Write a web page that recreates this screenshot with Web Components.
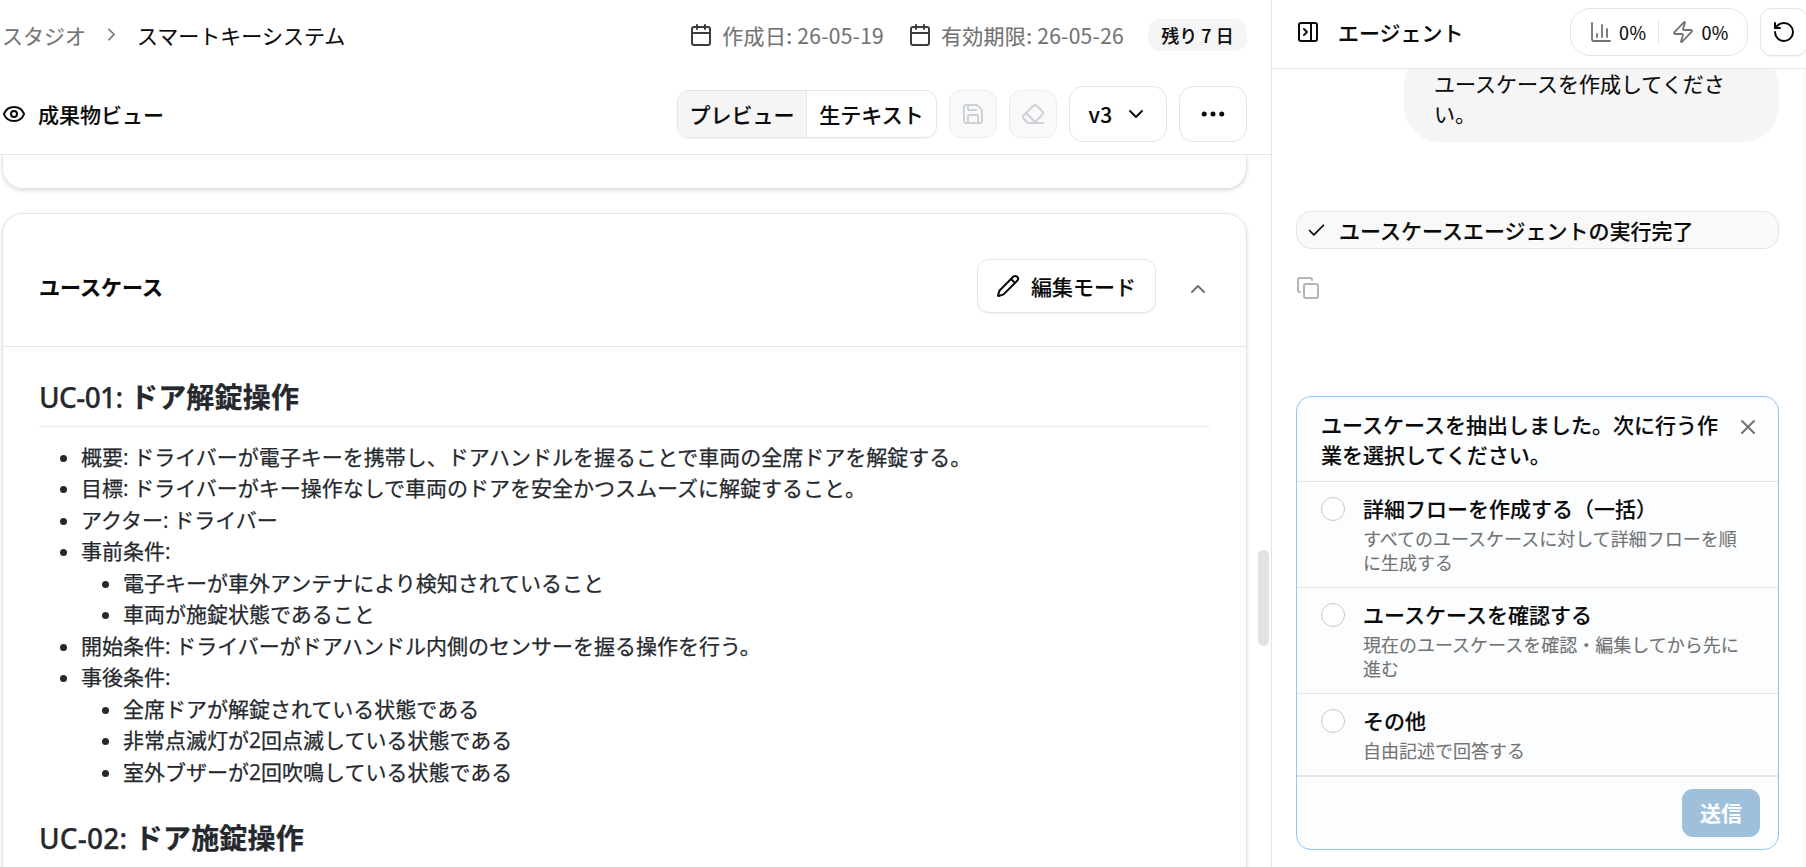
<!DOCTYPE html>
<html lang="ja">
<head>
<meta charset="utf-8">
<title>スマートキーシステム</title>
<style>
  :root {
    --border: #e5e5e5;
    --fg: #0a0a0a;
    --muted: #737373;
    --soft: #f5f5f5;
    --shadow: 0 1.5px 4.5px rgba(0, 0, 0, .1), 0 1.5px 3px -1.5px rgba(0, 0, 0, .1);
  }
  * { box-sizing: border-box; }
  html, body { height: 100%; }
  body {
    margin: 0;
    overflow: hidden;
    background: #fff;
    color: var(--fg);
    font: 400 21px/30px "Noto Sans CJK JP", "Noto Sans", sans-serif;
    -webkit-text-stroke: .12px currentColor;
  }
</style>
</head>
<body>
<app-shell>
  <crumb-bar slot="main" root="スタジオ" current="スマートキーシステム">
    <date-item label="作成日: 26-05-19"></date-item>
    <date-item label="有効期限: 26-05-26"></date-item>
    <day-badge>残り 7 日</day-badge>
  </crumb-bar>
  <view-toolbar slot="main" heading="成果物ビュー"></view-toolbar>
  <artifact-scroll slot="main">
    <artifact-card class="prev"></artifact-card>
    <artifact-card heading="ユースケース">
      <use-case-list></use-case-list>
    </artifact-card>
  </artifact-scroll>

  <agent-header slot="side">エージェント</agent-header>
  <chat-log slot="side">
    <chat-bubble>ユースケースを作成してください。</chat-bubble>
    <run-status>ユースケースエージェントの実行完了</run-status>
    <copy-action></copy-action>
    <choice-card>
      <span slot="question">ユースケースを抽出しました。次に行う作業を選択してください。</span>
      <choice-option label="詳細フローを作成する（一括）">すべてのユースケースに対して詳細フローを順に生成する</choice-option>
      <choice-option label="ユースケースを確認する">現在のユースケースを確認・編集してから先に進む</choice-option>
      <choice-option label="その他">自由記述で回答する</choice-option>
    </choice-card>
  </chat-log>
</app-shell>

<script>
const ICONS = {
  right: '<path d="m9 18 6-6-6-6"/>',
  down: '<path d="m6 9 6 6 6-6"/>',
  up: '<path d="m18 15-6-6-6 6"/>',
  x: '<path d="M18 6 6 18M6 6l12 12"/>',
  check: '<path d="M20 6 9 17l-5-5"/>',
  calendar: '<path d="M8 2v4M16 2v4"/><rect width="18" height="18" x="3" y="4" rx="2"/><path d="M3 10h18"/>',
  eye: '<path d="M2.062 12.348a1 1 0 0 1 0-.696 10.75 10.75 0 0 1 19.876 0 1 1 0 0 1 0 .696 10.75 10.75 0 0 1-19.876 0"/><circle cx="12" cy="12" r="3"/>',
  save: '<path d="M15.2 3a2 2 0 0 1 1.4.6l3.8 3.8a2 2 0 0 1 .6 1.4V19a2 2 0 0 1-2 2H5a2 2 0 0 1-2-2V5a2 2 0 0 1 2-2z"/><path d="M17 21v-7a1 1 0 0 0-1-1H8a1 1 0 0 0-1 1v7M7 3v4a1 1 0 0 0 1 1h7"/>',
  eraser: '<path d="m7 21-4.3-4.3c-1-1-1-2.5 0-3.4l9.6-9.6c1-1 2.5-1 3.4 0l5.6 5.6c1 1 1 2.5 0 3.4L13 21M22 21H7M5 11l9 9"/>',
  dots: '<circle cx="12" cy="12" r="1"/><circle cx="19" cy="12" r="1"/><circle cx="5" cy="12" r="1"/>',
  pencil: '<path d="M21.174 6.812a1 1 0 0 0-3.986-3.987L3.842 16.174a2 2 0 0 0-.5.83l-1.321 4.352a.5.5 0 0 0 .623.622l4.353-1.32a2 2 0 0 0 .83-.497z"/><path d="m15 5 4 4"/>',
  panel: '<rect width="18" height="18" x="3" y="3" rx="2"/><path d="M15 3v18m-7-12 3 3-3 3"/>',
  chart: '<path d="M3 3v16a2 2 0 0 0 2 2h16M18 17V9M13 17V5M8 17v-3"/>',
  zap: '<path d="M4 14a1 1 0 0 1-.78-1.63l9.9-10.2a.5.5 0 0 1 .86.46l-1.92 6.02A1 1 0 0 0 13 10h7a1 1 0 0 1 .78 1.63l-9.9 10.2a.5.5 0 0 1-.86-.46l1.92-6.02A1 1 0 0 0 11 14z"/>',
  undo: '<path d="M3 12a9 9 0 1 0 9-9 9.75 9.75 0 0 0-6.74 2.74L3 8"/><path d="M3 3v5h5"/>',
  copy: '<rect width="14" height="14" x="8" y="8" rx="2"/><path d="M4 16c-1.1 0-2-.9-2-2V4c0-1.1.9-2 2-2h10c1.1 0 2 .9 2 2"/>',
};

// Small helper: every element here is static markup in an open shadow root.
function define(name, render) {
  customElements.define(name, class extends HTMLElement {
    connectedCallback() {
      if (this.shadowRoot) return;
      this.attachShadow({ mode: "open" }).innerHTML =
        `<style>*{box-sizing:border-box}:host{box-sizing:border-box}</style>` + render(this);
    }
  });
}

define("ui-icon", (el) => {
  const size = el.getAttribute("size") || 24;
  return `
    <style>
      :host { display: block; flex: none; width: ${size}px; height: ${size}px; }
      svg { display: block; }
    </style>
    <svg width="${size}" height="${size}" viewBox="0 0 24 24" fill="none" stroke="currentColor"
      stroke-width="${el.getAttribute("stroke") || 2}" stroke-linecap="round" stroke-linejoin="round">${ICONS[el.getAttribute("name")]}</svg>`;
});

define("app-shell", () => `
  <style>
    :host { display: flex; height: 100vh; overflow: hidden; }
    main { width: 1271px; flex: none; display: flex; flex-direction: column; min-height: 0; }
    aside { flex: 1; min-width: 0; display: flex; flex-direction: column; border-left: 1px solid var(--border); }
  </style>
  <main><slot name="main"></slot></main>
  <aside><slot name="side"></slot></aside>`);

define("crumb-bar", (el) => `
  <style>
    :host { display: flex; align-items: center; justify-content: space-between; height: 70px; flex: none; padding: 0 24px 0 2px; }
    nav, .meta { display: flex; align-items: center; }
    nav { gap: 15px; padding-bottom: 1px; }
    nav, .root { color: var(--muted); }
    .current { color: var(--fg); }
    .meta { gap: 24px; }
  </style>
  <nav><span class="root">${el.getAttribute("root")}</span><ui-icon name="right" size="21"></ui-icon><span class="current">${el.getAttribute("current")}</span></nav>
  <div class="meta"><slot></slot></div>`);

define("date-item", (el) => `
  <style>
    :host { display: flex; align-items: center; gap: 9px; color: var(--muted); }
    ui-icon { color: #3c3c3c; }
    span { letter-spacing: .28px; }
  </style>
  <ui-icon name="calendar"></ui-icon><span>${el.getAttribute("label")}</span>`);

define("day-badge", () => `
  <style>
    :host { display: block; width: 99px; height: 32px; padding-top: 1px; border-radius: 12px; background: var(--soft); font-size: 18px; font-weight: 500; text-align: center; white-space: nowrap; }
  </style>
  <slot></slot>`);

define("view-toolbar", (el) => `
  <style>
    :host { display: flex; align-items: center; justify-content: space-between; height: 85px; flex: none; padding: 4px 24px 0 2px; border-bottom: 1px solid var(--border); font-weight: 500; }
    .heading, .tools, .toggle, button { display: flex; align-items: center; }
    .heading { gap: 12px; }
    .tools { gap: 12px; }
    .toggle { width: 260px; height: 48px; border: 1px solid var(--border); border-radius: 12px; overflow: hidden; box-shadow: 0 1px 2px rgba(0,0,0,.05); }
    .toggle span { flex: 1; height: 100%; padding-top: 8px; text-align: center; }
    .toggle .on { flex: 0 0 129px; background: var(--soft); border-right: 1px solid var(--border); }
    button { justify-content: center; height: 56px; margin: 0; padding: 0; font: inherit; color: inherit; background: #fff; border: 1px solid var(--border); border-radius: 14px; }
    .off { width: 48px; height: 48px; border-radius: 12px; background: #f9f9f9; color: #cdd1d8; border-color: #ececec; }
    .version { width: 98px; gap: 11px; letter-spacing: .4px; }
    .more { width: 68px; }
  </style>
  <div class="heading"><ui-icon name="eye"></ui-icon><span>${el.getAttribute("heading")}</span></div>
  <div class="tools">
    <div class="toggle"><span class="on">プレビュー</span><span>生テキスト</span></div>
    <button class="off" aria-label="保存"><ui-icon name="save"></ui-icon></button>
    <button class="off" aria-label="消去"><ui-icon name="eraser"></ui-icon></button>
    <button class="version"><span>v3</span><ui-icon name="down"></ui-icon></button>
    <button class="more" aria-label="その他"><ui-icon name="dots" size="30"></ui-icon></button>
  </div>`);

define("artifact-scroll", () => `
  <style>
    :host { display: flex; flex: 1; min-height: 0; overflow: hidden; padding: 0 2px 0 2px; }
    .list { width: 1245px; display: flex; flex-direction: column; gap: 24px; }
    .track { flex: 1; display: flex; justify-content: flex-end; }
    .thumb { width: 11px; height: 96px; margin-top: 395px; border-radius: 6px; background: #e2e2e2; }
  </style>
  <div class="list"><slot></slot></div>
  <div class="track"><div class="thumb"></div></div>`);

define("artifact-card", (el) => {
  const heading = el.getAttribute("heading");
  if (!heading) {
    // Tail of the card scrolled out above.
    return `
      <style>
        :host { display: block; flex: none; height: 34px; border: 1px solid var(--border); border-top: 0; border-radius: 0 0 21px 21px; box-shadow: var(--shadow); }
      </style>`;
  }
  return `
    <style>
      :host { display: block; flex: none; border: 1px solid var(--border); border-radius: 21px; box-shadow: var(--shadow); }
      header { display: flex; align-items: center; height: 133px; padding: 12px 36px 0; border-bottom: 1px solid var(--border); font-weight: 500; }
      h3 { flex: 1; margin: 0; padding-bottom: 1px; font-size: inherit; font-weight: 700; }
      button { display: flex; align-items: center; gap: 11px; width: 179px; height: 54px; padding: 0 0 0 18px; font: inherit; color: inherit; background: #fff; border: 1px solid var(--border); border-radius: 12px; box-shadow: 0 1px 2px rgba(0,0,0,.05); }
      .fold { margin: 5px 0 0 30px; color: var(--muted); }
      .body { padding: 33px 36px 36px; }
    </style>
    <header><h3>${heading}</h3><button><ui-icon name="pencil"></ui-icon><span>編集モード</span></button><ui-icon class="fold" name="up"></ui-icon></header>
    <div class="body"><slot></slot></div>`;
});

define("use-case-list", () => `
  <style>
    :host { display: block; color: #25292e; line-height: 31.5px; font-family: "Open Sans", "Noto Sans CJK JP", sans-serif; -webkit-text-stroke: .25px currentColor; }
    h2 { margin: 0 0 14.5px; padding-bottom: 11px; border-bottom: 1px solid #ebebeb; font-size: 28px; line-height: 35px; font-weight: 700; letter-spacing: .2px; }
    h2 .id { font-family: "Noto Sans", "Open Sans", sans-serif; font-weight: 500; }
    .first .id { letter-spacing: -.6px; }
    ul { margin: 0 0 33px; padding-left: 42px; list-style: disc; }
    ul ul { margin: 0; }
    li { word-spacing: -.8px; }
  </style>
  <h2 class="first"><span class="id">UC-01:</span> ドア解錠操作</h2>
  <ul>
    <li>概要: ドライバーが電子キーを携帯し、ドアハンドルを握ることで車両の全席ドアを解錠する。</li>
    <li>目標: ドライバーがキー操作なしで車両のドアを安全かつスムーズに解錠すること。</li>
    <li>アクター: ドライバー</li>
    <li>事前条件:
      <ul>
        <li>電子キーが車外アンテナにより検知されていること</li>
        <li>車両が施錠状態であること</li>
      </ul>
    </li>
    <li>開始条件: ドライバーがドアハンドル内側のセンサーを握る操作を行う。</li>
    <li>事後条件:
      <ul>
        <li>全席ドアが解錠されている状態である</li>
        <li>非常点滅灯が2回点滅している状態である</li>
        <li>室外ブザーが2回吹鳴している状態である</li>
      </ul>
    </li>
  </ul>
  <h2><span class="id">UC-02:</span> ドア施錠操作</h2>`);

define("agent-header", () => `
  <style>
    :host { display: flex; align-items: center; flex: none; height: 69px; padding: 0 0 4px 24px; border-bottom: 1px solid var(--border); }
    .title { flex: 1; margin-left: 18px; font-weight: 500; }
    .usage { display: flex; align-items: center; flex: none; height: 48px; width: 178px; padding: 0 0 0 18px; border: 1px solid var(--border); border-radius: 20px; font-size: 18px; }
    .usage ui-icon { color: var(--muted); }
    .usage span { margin-left: 6px; letter-spacing: .4px; }
    .usage i { width: 1px; height: 24px; margin: 0 12px; background: var(--border); }
    .reset { display: flex; align-items: center; justify-content: center; flex: none; width: 48px; height: 48px; margin: 0 -2px 0 12px; border: 1px solid var(--border); border-radius: 12px; box-shadow: 0 1px 2px rgba(0,0,0,.05); }
  </style>
  <ui-icon name="panel"></ui-icon>
  <span class="title"><slot></slot></span>
  <div class="usage"><ui-icon name="chart" stroke="1.8"></ui-icon><span>0%</span><i></i><ui-icon name="zap" stroke="1.8"></ui-icon><span>0%</span></div>
  <div class="reset"><ui-icon name="undo"></ui-icon></div>`);

define("chat-log", () => `
  <style>
    :host { display: flex; flex-direction: column; flex: 1; min-height: 0; overflow: hidden; padding: 0 24px; border-right: 3px solid #fafafa; }
  </style>
  <slot></slot>`);

define("chat-bubble", () => `
  <style>
    :host { display: block; flex: none; align-self: flex-end; width: 375px; margin-top: -19px; padding: 18px 29px 14px 30px; border-radius: 36px; background: var(--soft); }
  </style>
  <slot></slot>`);

define("run-status", () => `
  <style>
    :host { display: flex; align-items: center; gap: 12px; flex: none; height: 38px; margin-top: 69px; padding: 0 9px; border: 1px solid var(--border); border-radius: 15px; background: #f9f9f9; font-weight: 500; }
  </style>
  <ui-icon name="check" size="21"></ui-icon><span><slot></slot></span>`);

define("copy-action", () => `
  <style>:host { display: block; flex: none; margin-top: 27px; color: #b5b5b5; }</style>
  <ui-icon name="copy"></ui-icon>`);

define("choice-card", () => `
  <style>
    :host { display: flex; flex-direction: column; flex: none; margin-top: 96px; border: 1px solid #8ec5ff; border-radius: 15px; background: #fbfdff; }
    header { display: flex; gap: 14px; padding: 12px 18px 12px 24px; border-bottom: 1px solid var(--border); font-weight: 500; }
    .q { flex: 1; }
    header ui-icon { margin-top: 6px; color: var(--muted); }
    footer { display: flex; justify-content: flex-end; height: 73px; padding: 12px 18px 0; border-top: 1px solid var(--border); }
    button { width: 78px; height: 48px; padding: 0 0 2px; border: 0; border-radius: 11px; background: #9ec0da; color: #fbfdff; font: inherit; font-weight: 700; }
  </style>
  <header><div class="q"><slot name="question"></slot></div><ui-icon name="x"></ui-icon></header>
  <slot></slot>
  <footer><button>送信</button></footer>`);

define("choice-option", (el) => `
  <style>
    :host { display: flex; gap: 18px; padding: 11px 24px 13px; border-bottom: 1px solid var(--border); }
    i { flex: none; width: 24px; height: 24px; margin-top: 4px; border: 1px solid #c6c8ca; border-radius: 50%; background: #fff; }
    div { flex: 1; display: flex; flex-direction: column; gap: 3px; }
    b { font-weight: 500; }
    small { width: 380px; font-size: 18px; line-height: 24px; color: var(--muted); }
  </style>
  <i></i>
  <div><b>${el.getAttribute("label")}</b><small><slot></slot></small></div>`);
</script>
</body>
</html>
